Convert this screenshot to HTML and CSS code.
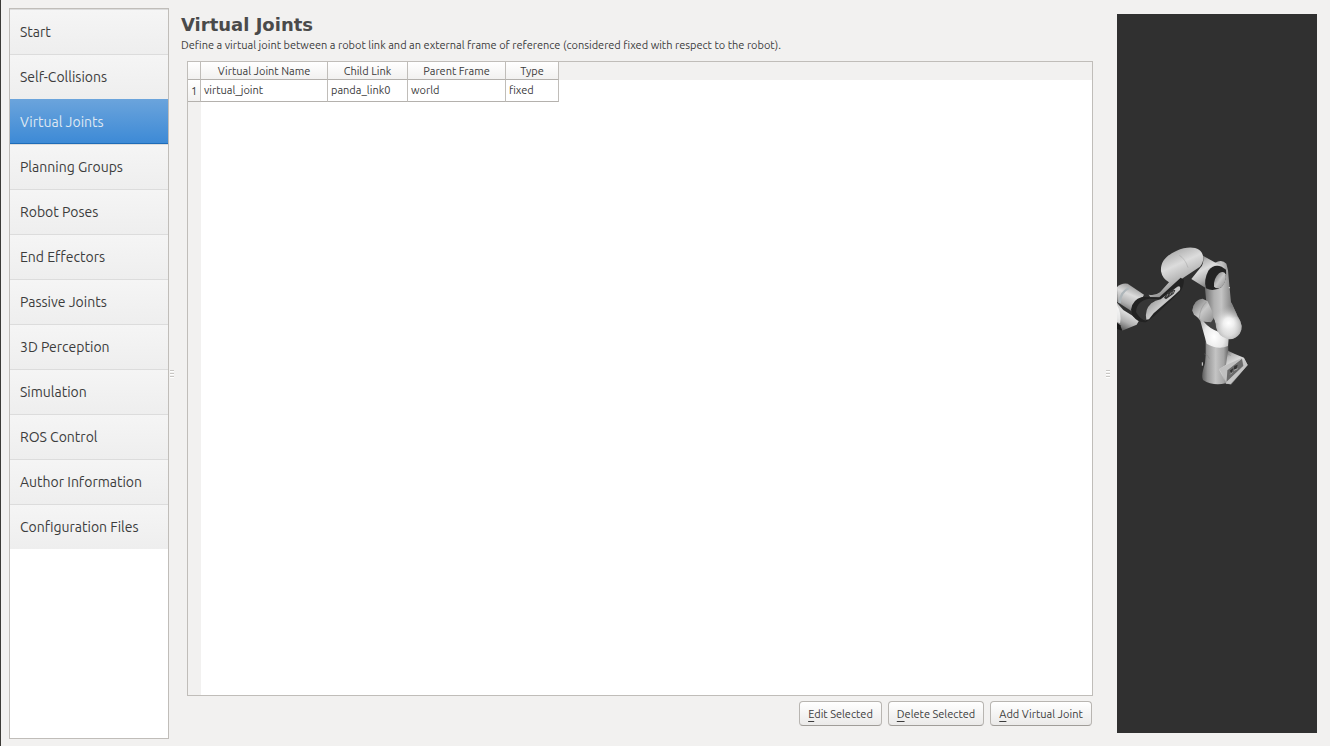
FILE: index.html
```html
<!doctype html>

<html lang="en">
	<head>
		<title>MoveIt Setup Assistant</title>
		<meta charset="utf-8" />

		<link rel="stylesheet" href="styles.css">
	</head>

	<body>
		<nav class="nav">
			<a href="#start">Start</a>
			<a href="#collisions">Self-Collisions</a>
			<a href="#virtual" class="active">Virtual Joints</a>
			<a href="#groups">Planning Groups</a>
			<a href="#poses">Robot Poses</a>
			<a href="#effectors">End Effectors</a>
			<a href="#passive">Passive Joints</a>
			<a href="#perception">3D Perception</a>
			<a href="#simulation">Simulation</a>
			<a href="#control">ROS Control</a>
			<a href="#author">Author Information</a>
			<a href="#files">Configuration Files</a>
		</nav>
		<div class="splitter"><i></i></div>

		<main class="main">
			<h1>Virtual Joints</h1>
			<p>Define a virtual joint between a robot link and an external frame of reference (considered fixed with respect to the robot).</p>
			<div class="sheet">
				<table>
					<thead>
						<tr>
							<th class="num"></th>
							<th class="name">Virtual Joint Name</th>
							<th class="child">Child Link</th>
							<th class="parent">Parent Frame</th>
							<th class="type">Type</th>
						</tr>
					</thead>
					<tbody>
						<tr>
							<th class="num">1</th>
							<td>virtual_joint</td>
							<td>panda_link0</td>
							<td>world</td>
							<td>fixed</td>
						</tr>
					</tbody>
				</table>
			</div>
			<div class="buttons">
				<button type="button" class="edit"><u>E</u>dit Selected</button>
				<button type="button" class="delete"><u>D</u>elete Selected</button>
				<button type="button" class="add"><u>A</u>dd Virtual Joint</button>
			</div>
		</main>
		<div class="splitter right"><i></i></div>

		<div class="view">
			<svg viewBox="51 -648 600 2157" preserveAspectRatio="xMinYMid meet" role="img" aria-label="Panda robot arm">
				<defs>
					<linearGradient id="tube" x1="0" x2="1" y1="0" y2="0">
						<stop offset="0" stop-color="#5c5c5c" />
						<stop offset=".2" stop-color="#989898" />
						<stop offset=".5" stop-color="#c4c4c4" />
						<stop offset=".8" stop-color="#a4a4a4" />
						<stop offset="1" stop-color="#5c5c5c" />
					</linearGradient>
					<linearGradient id="shoulder" x1=".2" x2=".7" y1="0" y2="1">
						<stop offset="0" stop-color="#666" />
						<stop offset=".2" stop-color="#b8b8b8" />
						<stop offset=".4" stop-color="#dcdcdc" />
						<stop offset=".65" stop-color="#b4b4b4" />
						<stop offset="1" stop-color="#585858" />
					</linearGradient>
					<linearGradient id="wrist" x1=".7" x2=".3" y1="0" y2="1">
						<stop offset="0" stop-color="#888" />
						<stop offset=".4" stop-color="#dcdcdc" />
						<stop offset=".7" stop-color="#b0b0b0" />
						<stop offset="1" stop-color="#5c5c5c" />
					</linearGradient>
					<linearGradient id="cap" x1="0" x2="1" y1="0" y2="1">
						<stop offset="0" stop-color="#666" />
						<stop offset=".5" stop-color="#c8c8c8" />
						<stop offset="1" stop-color="#888" />
					</linearGradient>
					<radialGradient id="elbow" cx=".5" cy=".62" r=".65">
						<stop offset="0" stop-color="#fff" />
						<stop offset=".35" stop-color="#e8e8e8" />
						<stop offset=".7" stop-color="#b4b4b4" />
						<stop offset="1" stop-color="#777" />
					</radialGradient>
					<linearGradient id="upper" gradientUnits="userSpaceOnUse" x1="315" x2="424" y1="200" y2="200">
						<stop offset="0" stop-color="#6c6c6c" />
						<stop offset=".25" stop-color="#b0b0b0" />
						<stop offset=".45" stop-color="#c4c4c4" />
						<stop offset=".72" stop-color="#888" />
						<stop offset="1" stop-color="#707070" />
					</linearGradient>
					<radialGradient id="glow" gradientUnits="userSpaceOnUse" cx="386" cy="279" r="52">
						<stop offset="0" stop-color="#fff" />
						<stop offset=".3" stop-color="#f0f0f0" />
						<stop offset="1" stop-color="#b4b4b4" stop-opacity="0" />
					</radialGradient>
					<radialGradient id="neck" cx=".6" cy=".78" r=".7">
						<stop offset="0" stop-color="#fff" />
						<stop offset=".4" stop-color="#e8e8e8" />
						<stop offset="1" stop-color="#707070" />
					</radialGradient>
				</defs>

				<!-- hand -->
				<path fill="url(#wrist)" d="M51 218 70 240 118 270 110 284 66 302 51 284Z" />
				<path fill="#fff" opacity=".7" d="M51 224Q66 254 60 280L51 276Z" />
				<path fill="#181818" d="M51 278 61 286 67 302 51 297Z" />
				<path fill="url(#wrist)" d="M51 171Q64 158 83 161L132 194 102 248 52 216Z" />
				<path fill="none" stroke="#aeb6ba" stroke-width="7" d="M59 219Q61 185 87 174" />

				<!-- forearm -->
				<path fill="url(#shoulder)" d="M183 124C181 94 199 76 230 62 254 51 282 49 297 59 314 71 313 96 300 110L248 145 194 204 151 202 146 194Q166 198 180 187L207 157Q187 146 183 124Z" />
				<path fill="none" stroke="#8d8d8d" stroke-width="1" d="M238 76Q256 87 264 113" />
				<path fill="#222" d="M93 239Q97 209 126 201L178 202 242 143 252 149Q251 177 235 190L164 257 139 276Q116 280 98 258Z" />
				<path fill="#363636" d="M108 246Q110 211 149 206L179 207 158 215Q138 237 138 272 120 269 108 246Z" />
				<path fill="url(#cap)" d="M139 269Q133 239 154 220 165 211 182 208L232 170Q243 165 240 180L225 194 161 250 147 268Z" />
				<path fill="#333" d="M192 203 203 187 218 178 226 181 221 191 198 208Z" />
				<path fill="none" stroke="#b0b0b0" stroke-width="2" d="M200 200 204 192M209 196 214 187M218 190 221 182" />

				<!-- upper arm -->
				<path fill="url(#upper)" d="M345 98Q366 86 379 101L384 121Q390 187 393 216L414 261Q432 288 419 311 404 332 379 325L345 302 322 250 315 175 344 161Z" />
				<path fill="url(#shoulder)" d="M309 77 348 99 374 110 348 176 317 174 274 147 301 113Q313 102 309 77Z" />
				<path fill="#232323" d="M318 175Q310 151 325 122 341 101 365 110L378 119Q382 148 365 171 340 187 318 175Z" />
				<path fill="url(#cap)" d="M342 170Q340 146 357 130 371 120 377 133 380 153 366 170 352 180 342 170Z" />
				<circle cx="388" cy="173" r="2" fill="#ddd" />

				<!-- elbow and neck -->
				<path fill="url(#tube)" d="M317 325Q348 350 384 325L386 400Q391 438 377 460 339 469 309 450 304 440 309 421 317 400 317 375Z" />
				<path fill="url(#neck)" d="M277 242Q281 209 307 206L323 214 343 262 386 326 384 348Q354 361 320 341L307 295 301 273Z" />
				<path fill="#424242" d="M310 274 330 276 341 260 349 284 357 306Q329 297 310 274Z" />
				<path fill="url(#cap)" d="M277 242Q281 209 307 206L323 214 344 261 333 277 309 274 282 254Z" />
				<path fill="none" stroke="#777" stroke-width="1" d="M298 265Q300 233 319 216" />
				<path fill="url(#elbow)" d="M350 250Q366 262 396 258L414 261Q433 288 419 311 404 330 383 327 354 319 348 291Z" />
				<path fill="url(#upper)" d="M335 220H395L410 252Q385 285 350 280L338 258Z" />
				<path fill="url(#glow)" d="M335 225H397L414 261Q433 288 419 311 404 330 383 327 354 319 348 291Z" />

				<!-- base -->
				<path fill="url(#shoulder)" d="M384 362 403 371 432 383 443 405 393 464 377 460 357 418 378 404Z" />
				<path fill="none" stroke="#777" stroke-width="1" d="M312 371 323 377 328 386M384 372 393 377" />
				<path fill="#c0c0c0" d="M357 417 385 402 430 382 382 420 379 458 369 435Z" />
				<path fill="#6b6b6b" d="M382 421 426 386 430 408 380 455Z" />
				<path fill="#c4c4c4" d="M380 455 431 407 434 389 443 405 392 462 377 461Z" />
				<path fill="#333" d="M389 422 400 414 395 430ZM403 408 413 404 410 416 401 419Z" />
				<path fill="none" stroke="#ccc" stroke-width="2" d="M391 433 397 427M402 421 413 416M388 454 396 447" />
				<path fill="none" stroke="#ddd" stroke-width="3" d="M307 397V407" />
			</svg>
		</div>
	</body>
</html>
```
FILE: styles.css
```css
*{
	box-sizing:border-box;
	margin:0;
	padding:0;
}

body{
	display:flex;
	height:100vh;
	padding:8px 13px 7px 8px;
	border-left:1px solid #3c3b37;
	background:#f2f1f0;
	color:#3c3c3c;
	font-family:Ubuntu, "Noto Sans", sans-serif;
	font-size:11px;
}

/* left navigation */
.nav{
	width:160px;
	flex:none;
	border:1px solid #c0bdb9;
	background:#fff;
}
.nav a{
	display:block;
	height:45px;
	padding-left:10px;
	border-top:1px solid #dcdcdc;
	background:linear-gradient(#f5f5f5, #eee);
	color:#3c3c3c;
	font-size:14px;
	line-height:44px;
	text-decoration:none;
}
.nav .active{
	border-top:0;
	border-bottom:1px solid #1e6cb8;
	background:linear-gradient(#6ba4dc, #3d8ad6);
	color:#dfe8f2;
	line-height:46px;
}

/* splitter handles */
.splitter{
	display:flex;
	align-items:center;
	width:12px;
	flex:none;
	padding-left:1px;
}
.splitter i{
	width:4px;
	height:8px;
	background:repeating-linear-gradient(#c8c6c3 0 1px, #fff 1px 2px, transparent 2px 3px);
}
.splitter.right{
	justify-content:center;
	width:24px;
	padding-left:6px;
}

/* page */
.main{
	display:flex;
	flex:1;
	flex-direction:column;
	min-width:0;
	padding-bottom:13px;
}
h1{
	padding-top:5px;
	color:#4a4a4a;
	font:bold 18px/24px "DejaVu Sans", sans-serif;
}
p{
	line-height:16px;
	white-space:nowrap;
}
.sheet{
	flex:1;
	margin:8px 0 5px 6px;
	border:1px solid #c0bdb9;
	background:
		linear-gradient(#f2f1f0, #f2f1f0) 0 0 / 100% 18px no-repeat,
		linear-gradient(#f2f1f0, #f2f1f0) 0 0 / 13px 100% no-repeat,
		#fff;
}
table{
	width:371px;
	border-collapse:separate;
	border-spacing:0;
	table-layout:fixed;
}
th, td{
	height:18px;
	border-right:1px solid #c0bdb9;
	border-bottom:1px solid #b4b1ad;
	background:linear-gradient(#fff, #f2f1f0);
	font-weight:normal;
	line-height:16px;
	text-align:center;
	white-space:nowrap;
}
tbody th, td{
	height:22px;
}
td{
	padding:0 0 1px 3px;
	background:#fff;
	text-align:left;
}
.num{width:13px;}
.name{width:127px;}
.child{width:80px;}
.parent{width:98px;}
.type{width:53px;}

.buttons{
	display:flex;
	justify-content:flex-end;
	gap:6px;
	padding-right:1px;
}
button{
	height:25px;
	border:1px solid #b8b5b1;
	border-bottom-color:#a09d99;
	border-radius:4px;
	background:linear-gradient(#fff, #ebeae9);
	color:#3c3c3c;
	font:inherit;
	white-space:nowrap;
}
button u{
	text-underline-offset:3px;
}
.edit{width:83px;}
.delete{width:96px;}
.add{width:102px;}

/* robot view */
.view{
	width:200px;
	flex:none;
	margin:6px 0;
	background:#303030;
}
.view svg{
	display:block;
	width:100%;
	height:100%;
}
```
